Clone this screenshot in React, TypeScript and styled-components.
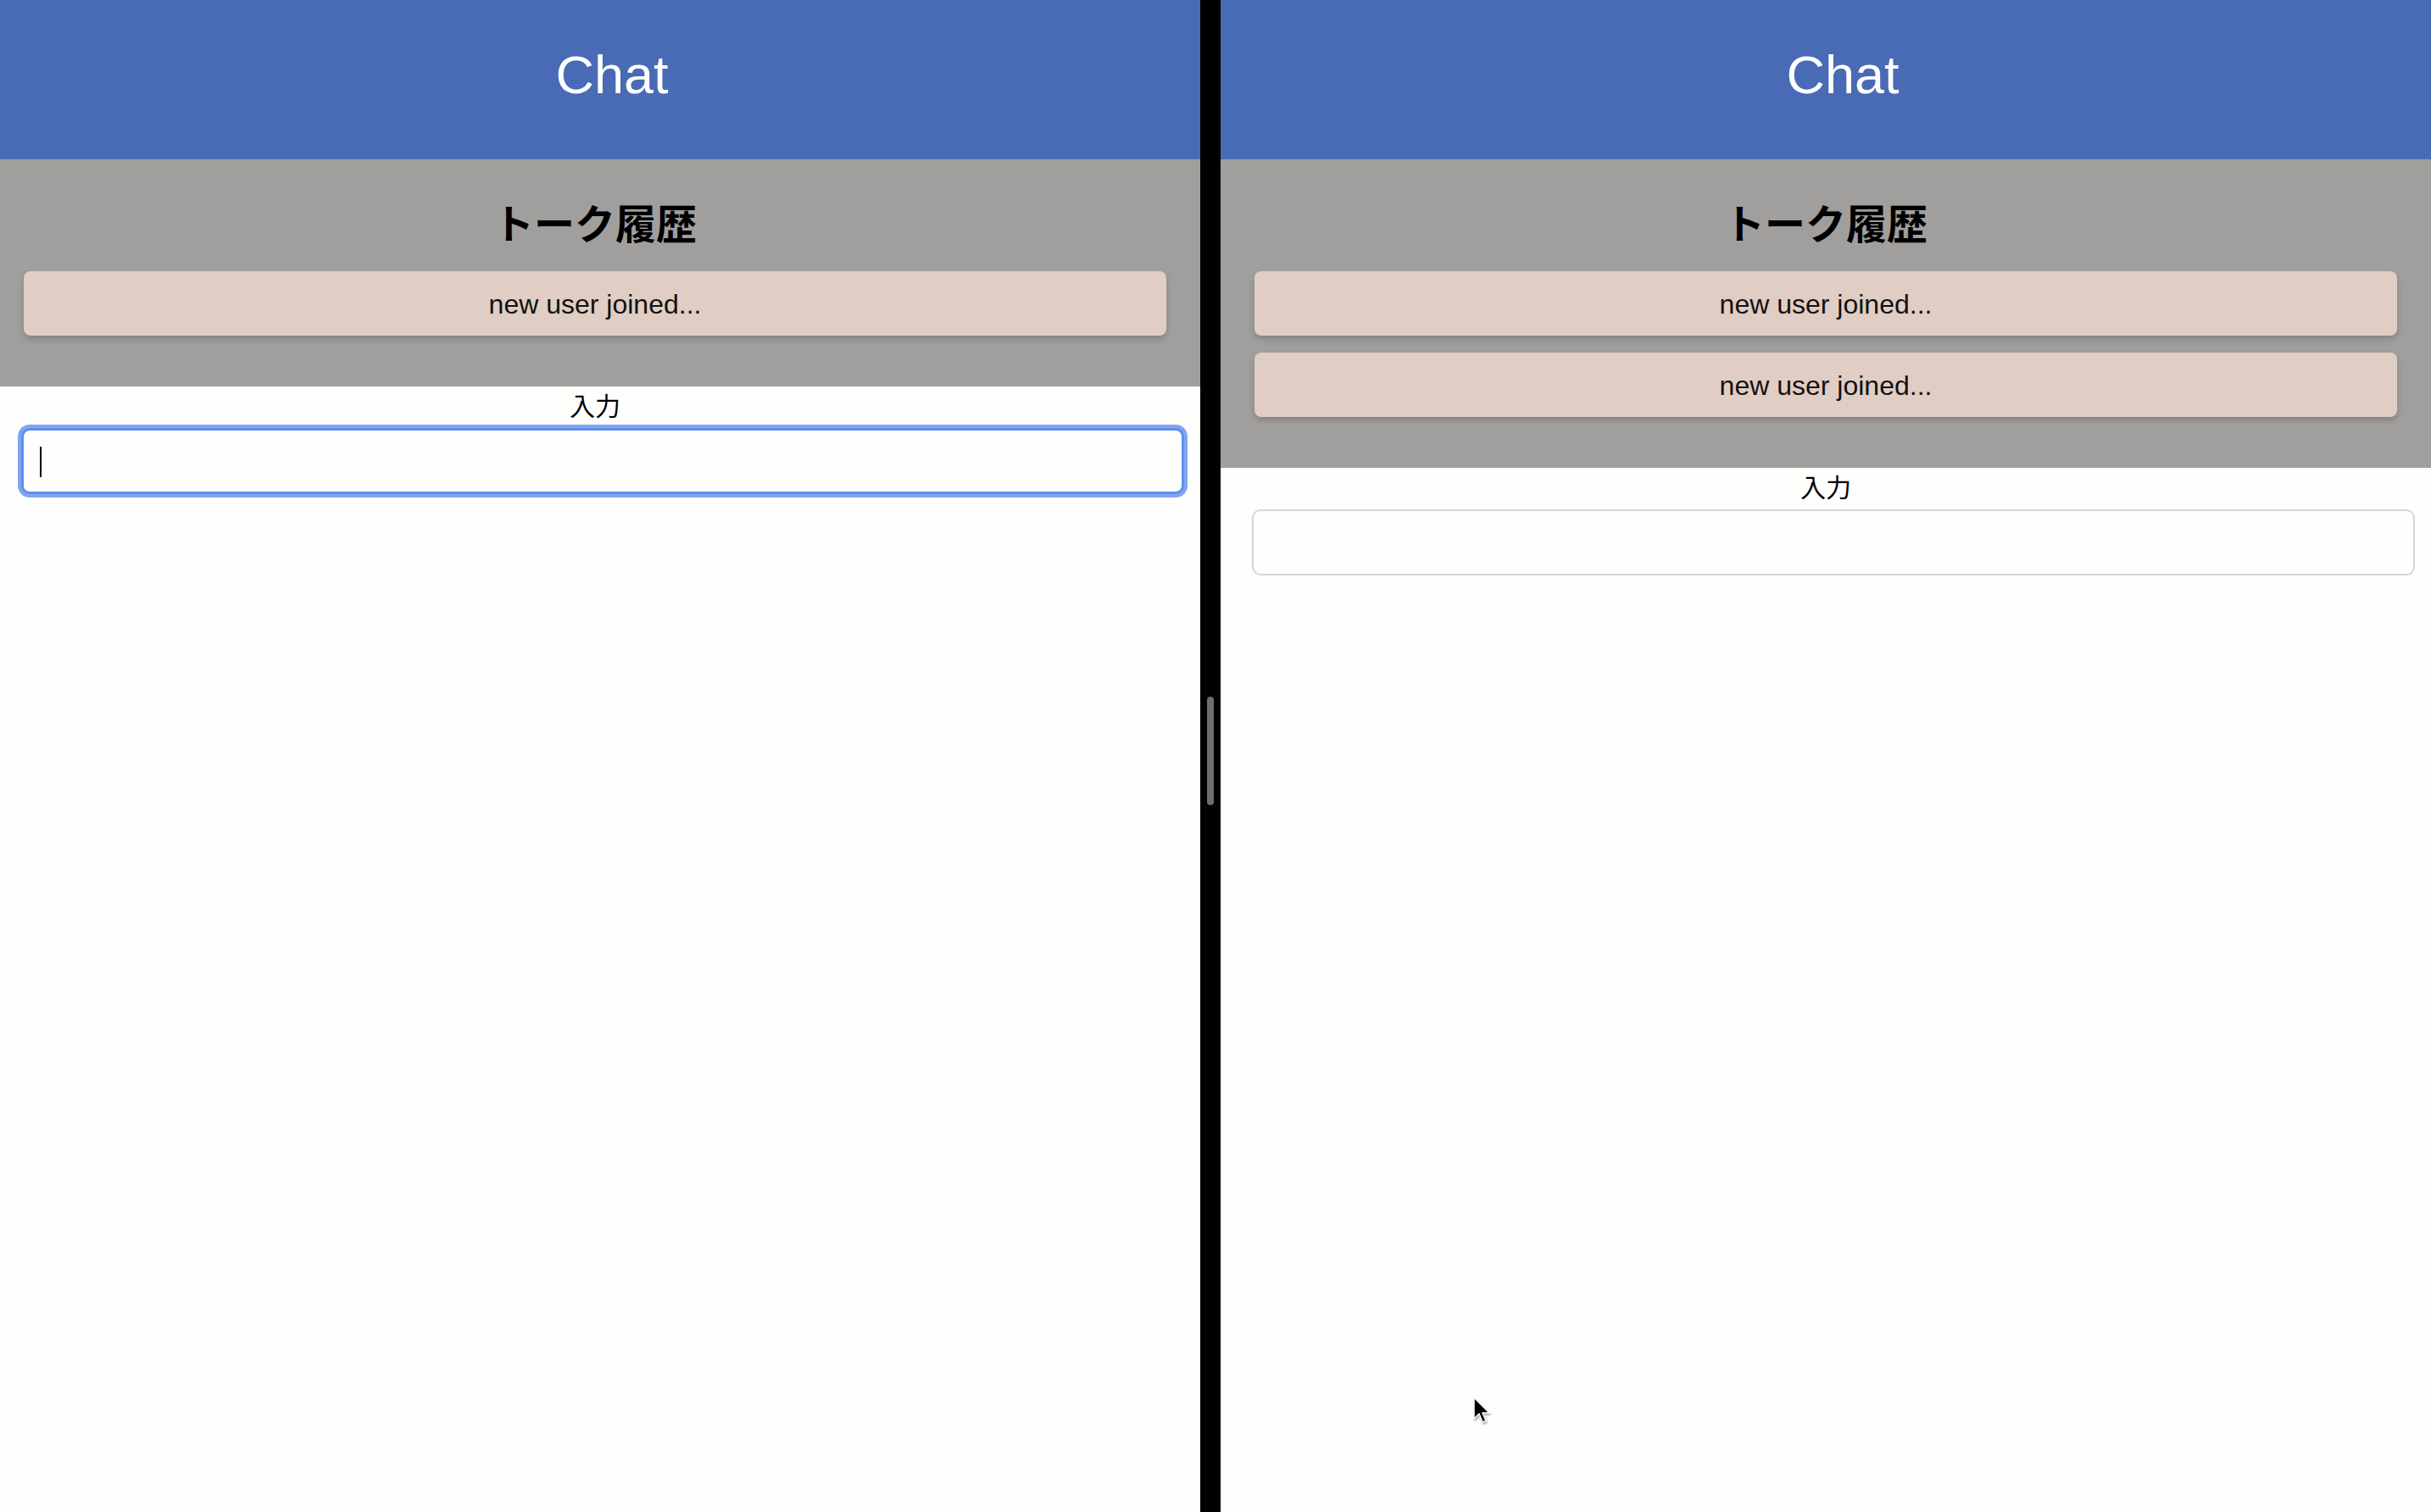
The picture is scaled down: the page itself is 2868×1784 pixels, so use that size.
import React from "react";
import styled, { createGlobalStyle } from "styled-components";

const GlobalStyle = createGlobalStyle`
  html, body {
    margin: 0;
    padding: 0;
    background: #fefefd;
  }
  body {
    font-family: "Liberation Sans", Arial, "Noto Sans CJK JP", sans-serif;
  }
  * { box-sizing: border-box; }
`;

const Screen = styled.div`
  position: relative;
  display: flex;
  width: 2868px;
  height: 1784px;
  overflow: hidden;
  background: #fefefd;
`;

const Pane = styled.div<{ $width: number }>`
  flex: 0 0 ${(p) => p.$width}px;
  width: ${(p) => p.$width}px;
  height: 100%;
  overflow: hidden;
  background: #fefefd;
`;

const ChatWindow = styled.div<{ $shift: number }>`
  width: 1428px;
  margin-left: ${(p) => p.$shift}px;
  display: flex;
  flex-direction: column;
`;

const Divider = styled.div`
  flex: 0 0 24px;
  height: 100%;
  background: #000;
  display: flex;
  align-items: center;
  justify-content: center;
  padding-bottom: 12px;
`;

const Handle = styled.div`
  width: 8px;
  height: 128px;
  border-radius: 4px;
  background: #6e6e6a;
`;

const Header = styled.header`
  height: 188px;
  background: #496bb6;
  display: flex;
  align-items: center;
  justify-content: center;
  padding-left: 40px;
  padding-bottom: 13px;
`;

const Title = styled.h1`
  margin: 0;
  font-family: "Liberation Sans", Arial, sans-serif;
  font-weight: 400;
  font-size: 63px;
  color: #ffffff;
`;

const History = styled.section`
  background: #a19f9e;
  padding: 45px 40px 60px;
  display: flex;
  flex-direction: column;
`;

const HistoryTitle = styled.h2`
  margin: 0 0 31px;
  text-align: center;
  font-family: "Noto Sans CJK JP", sans-serif;
  font-weight: 700;
  font-size: 48px;
  line-height: 56px;
  color: #000;
`;

const MessageList = styled.div`
  display: flex;
  flex-direction: column;
  gap: 20px;
`;

const Message = styled.div`
  height: 76px;
  border-radius: 8px;
  background: #e0cdc3;
  box-shadow: 0 4px 7px rgba(0, 0, 0, 0.18);
  display: flex;
  align-items: center;
  justify-content: center;
  padding-top: 2px;
  font-family: "Liberation Sans", Arial, sans-serif;
  font-size: 32px;
  color: #111;
`;

const InputArea = styled.div`
  display: flex;
  flex-direction: column;
  padding-top: 3px;
`;

const Label = styled.label`
  text-align: center;
  font-family: "Noto Sans CJK JP", sans-serif;
  font-size: 30px;
  line-height: 36px;
  color: #000;
  margin-bottom: 10px;
`;

const FieldWrap = styled.div`
  position: relative;
  margin-left: 37px;
  width: 1372px;
  height: 78px;
`;

const Field = styled.input<{ $focused?: boolean }>`
  width: 100%;
  height: 100%;
  border-radius: 10px;
  border: ${(p) => (p.$focused ? "3px solid #5f8fef" : "2px solid #d6d6d9")};
  box-shadow: ${(p) =>
    p.$focused ? "0 0 0 4px rgba(96, 142, 238, 0.8)" : "none"};
  background: #fefefd;
  outline: none;
  padding: 0 20px;
  font-size: 30px;
  font-family: "Liberation Sans", Arial, sans-serif;
`;

const Caret = styled.span`
  position: absolute;
  left: 22px;
  top: 22px;
  width: 2px;
  height: 36px;
  background: #000;
`;

const Pointer = styled.svg`
  position: absolute;
  left: 1737px;
  top: 1647px;
  filter: drop-shadow(1px 2px 1px rgba(0, 0, 0, 0.35));
`;

type PanelProps = { messages: string[]; focused?: boolean; shift?: number };

function ChatPanel({ messages, focused, shift = 0 }: PanelProps) {
  return (
    <ChatWindow $shift={shift}>
      <Header>
        <Title>Chat</Title>
      </Header>
      <History>
        <HistoryTitle>トーク履歴</HistoryTitle>
        <MessageList>
          {messages.map((m, i) => (
            <Message key={i}>{m}</Message>
          ))}
        </MessageList>
      </History>
      <InputArea>
        <Label>入力</Label>
        <FieldWrap>
          <Field $focused={focused} readOnly />
          {focused && <Caret />}
        </FieldWrap>
      </InputArea>
    </ChatWindow>
  );
}

export default function App() {
  return (
    <>
      <GlobalStyle />
      <Screen>
        <Pane $width={1416}>
          <ChatPanel messages={["new user joined..."]} focused shift={-12} />
        </Pane>
        <Divider>
          <Handle />
        </Divider>
        <Pane $width={1428}>
          <ChatPanel messages={["new user joined...", "new user joined..."]} />
        </Pane>
        <Pointer width="22" height="34" viewBox="0 0 22 34">
          <path
            d="M2 2 L2 27 L8 21 L12 31 L16 29.5 L12 20 L20 20 Z"
            fill="#000"
            stroke="#fff"
            strokeWidth="1.5"
            strokeLinejoin="round"
          />
        </Pointer>
      </Screen>
    </>
  );
}
